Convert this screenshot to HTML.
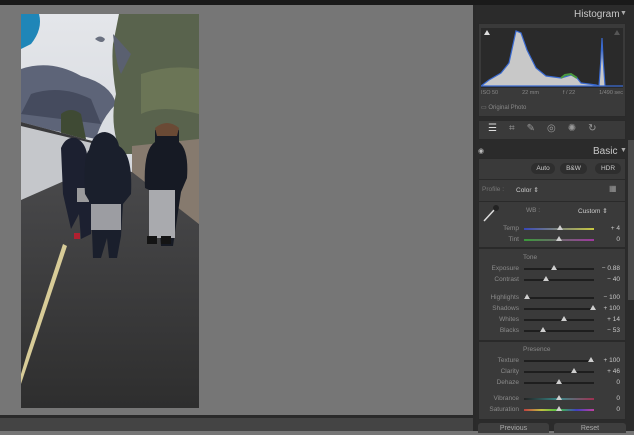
<!DOCTYPE html><html><head><style>
*{margin:0;padding:0;box-sizing:border-box}
body{width:634px;height:431px;overflow:hidden;background:#767676;font-family:"Liberation Sans",sans-serif;position:relative}
.a{position:absolute}
.lbl{position:absolute;font-size:6.5px;color:#8a8a8a;text-align:right;width:60px}
.val{position:absolute;font-size:6.5px;color:#c8c8c8;text-align:right;width:30px}
.trk{position:absolute;height:2px;background:#1e1e1e;width:70px;left:524px}
.th{position:absolute;width:0;height:0;border-left:3px solid transparent;border-right:3px solid transparent;border-bottom:5px solid #cfcfcf}
.pn{position:absolute;left:478px;width:148px;background:#3a3a3a;border:1px solid #2a2a2a}
</style></head><body>
<div class="a" style="left:0;top:0;width:634px;height:5px;background:#1a1a1a"></div>
<div class="a" style="left:0;top:415px;width:474px;height:3px;background:#2a2a2a"></div>
<div class="a" style="left:0;top:418px;width:474px;height:13px;background:#444"></div>
<div class="a" style="left:473px;top:5px;width:3px;height:426px;background:#2a2a2a"></div>
<div class="a" style="left:476px;top:5px;width:158px;height:426px;background:#2b2b2b"></div>
<div class="a" style="left:628px;top:140px;width:6px;height:160px;background:#4a4a4a"></div>
<!-- photo -->
<svg class="a" style="left:21px;top:14px" width="178" height="394" viewBox="0 0 178 394">
<defs><linearGradient id="sky" x1="0" y1="0" x2="0" y2="1"><stop offset="0" stop-color="#e4e6ea"/><stop offset="0.35" stop-color="#d8dbe0"/><stop offset="1" stop-color="#9aa0ab"/></linearGradient>
<linearGradient id="road" x1="0" y1="0" x2="0" y2="1"><stop offset="0" stop-color="#4a4a4c"/><stop offset="1" stop-color="#2e2e2e"/></linearGradient></defs>
<rect width="178" height="394" fill="url(#sky)"/>
<path d="M0 55 Q30 45 60 62 Q90 70 95 90 Q80 105 75 125 L0 110 Z" fill="#5d6478"/>
<path d="M10 80 Q40 70 70 85 L80 110 L0 100 Z" fill="#454b5e"/>
<path d="M74 25 q5 -5 10 0 q-2 6 -10 0z" fill="#6a7080"/>
<path d="M0 0 L18 0 Q22 15 10 30 L0 35 Z" fill="#1f86b8"/>
<path d="M98 0 L178 0 L178 140 L100 140 Q88 110 95 80 Q90 50 92 30 Z" fill="#59634d"/>
<path d="M92 20 Q95 50 100 60 L110 40 Z" fill="#5a6070"/>
<path d="M120 60 Q150 50 178 55 L178 100 Q140 90 120 100Z" fill="#6b7556"/>
<path d="M40 100 Q50 92 60 100 L65 125 L40 125Z" fill="#3f4a34"/>
<path d="M0 108 L75 128 L77 152 L0 186 Z" fill="#c5c7cb"/>
<path d="M0 108 L75 128 L75 130 L0 112Z" fill="#3a3a3c"/>
<path d="M111 132 L178 125 L178 210 L111 160Z" fill="#867a6e"/>
<path d="M0 186 L77 152 L111 158 L178 210 L178 394 L0 394Z" fill="url(#road)"/>
<path d="M42 230 L6 340 L0 360 L0 370 L10 340 L46 232Z" fill="#d8cc98"/>
<!-- left person -->
<path d="M40 134 Q45 122 55 124 Q64 128 66 140 L72 178 L70 220 L60 225 L58 200 L50 215 L42 180 Z" fill="#1c2030"/>
<rect x="56" y="174" width="12" height="14" fill="#9a9a9c"/>
<rect x="53" y="219" width="6" height="6" fill="#b02030"/>
<!-- middle -->
<path d="M68 136 Q72 118 84 118 Q96 120 98 132 Q112 140 110 180 L102 190 L100 222 L96 244 L88 244 L86 224 L80 244 L72 244 L70 190 L64 180 Q62 142 68 136Z" fill="#1a1f2c"/>
<rect x="70" y="190" width="30" height="26" fill="#9c9da2"/>
<!-- right -->
<path d="M134 116 Q148 108 158 116 L158 128 Q168 136 166 164 L160 178 L156 205 L152 232 L140 232 L138 208 L132 178 L124 174 Q122 136 134 128 Z" fill="#161a24"/>
<path d="M134 114 Q146 104 158 114 L156 122 L136 122Z" fill="#6a4a35"/>
<rect x="128" y="176" width="26" height="48" fill="#a9aaae"/>
<rect x="126" y="222" width="10" height="8" fill="#141414"/><rect x="140" y="222" width="10" height="8" fill="#141414"/>
</svg>
<!-- histogram -->
<div class="a" style="left:574px;top:9px;font-size:10px;color:#c8c8c8">Histogram</div>
<div class="a" style="left:620px;top:10px;font-size:7px;color:#aaa">▼</div>
<div class="pn" style="top:23px;height:94px"></div>
<svg class="a" style="left:481px;top:28px" width="142" height="60"><rect width="142" height="60" fill="#2a2a2a"/>
<path d="M0 58 L8 52 L20 45 L28 35 L35 3 L40 5 L46 22 L55 40 L65 48 L80 50 L90 47 L96 50 L100 55 L115 57 L118 58 L120 30 L121 10 L122 30 L124 58 L142 58 Z" fill="#c8c8c8" stroke="#3a6ad0" stroke-width="1.2"/>
<path d="M80 50 L84 47 L90 46 L96 50" stroke="#4a9a40" stroke-width="2" fill="none"/>
<polygon points="3,7 9,7 6,2" fill="#ddd"/><polygon points="133,7 139,7 136,2" fill="#555"/></svg>
<div class="a" style="left:481px;top:90px;width:142px;font-size:5.5px;color:#888;display:flex;justify-content:space-between"><span>ISO 50</span><span>22 mm</span><span>f / 22</span><span>1/490 sec</span></div>
<div class="a" style="left:481px;top:104px;font-size:6px;color:#888">▭ Original Photo</div>
<div class="pn" style="top:120px;height:20px"></div>
<div class="a" style="left:488px;top:123px;font-size:10px;color:#ddd;letter-spacing:12px">☰<span style="color:#999">⌗✎◎✺↻</span></div>
<div class="a" style="left:478px;top:147px;font-size:7px;color:#bbb">◉</div>
<div class="a" style="left:593px;top:146px;font-size:10px;color:#c8c8c8">Basic</div>
<div class="a" style="left:620px;top:147px;font-size:7px;color:#aaa">▼</div>
<div class="pn" style="top:158px;height:262px"></div>
<div class="a" style="left:531px;top:163px;width:24px;height:11px;border-radius:6px;background:#2e2e2e;font-size:6.5px;color:#ccc;text-align:center;line-height:11px">Auto</div>
<div class="a" style="left:560px;top:163px;width:27px;height:11px;border-radius:6px;background:#2e2e2e;font-size:6.5px;color:#ccc;text-align:center;line-height:11px">B&amp;W</div>
<div class="a" style="left:595px;top:163px;width:26px;height:11px;border-radius:6px;background:#2e2e2e;font-size:6.5px;color:#ccc;text-align:center;line-height:11px">HDR</div>
<div class="a" style="left:478px;top:179px;width:148px;height:1px;background:#2a2a2a"></div>
<div class="a" style="left:482px;top:186px;font-size:6.5px;color:#777">Profile :</div>
<div class="a" style="left:516px;top:186px;font-size:6.5px;color:#ccc">Color ⇕</div>
<div class="a" style="left:609px;top:184px;font-size:8px;color:#999">▦</div>
<div class="a" style="left:478px;top:201px;width:148px;height:1px;background:#2a2a2a"></div>
<svg class="a" style="left:481px;top:203px" width="20" height="20"><line x1="3" y1="18" x2="14" y2="6" stroke="#ddd" stroke-width="1.5"/><circle cx="15" cy="5" r="3" fill="#222"/></svg>
<div class="a" style="left:526px;top:207px;font-size:6.5px;color:#888">WB :</div>
<div class="a" style="left:578px;top:207px;font-size:6.5px;color:#ccc">Custom ⇕</div>
<div class="lbl" style="left:459px;top:225px">Temp</div><div class="trk" style="top:228px;background:linear-gradient(90deg,#3848b8,#c8c840)"></div><div class="th" style="left:557px;top:225px"></div><div class="val" style="left:590px;top:225px">+ 4</div>
<div class="lbl" style="left:459px;top:236px">Tint</div><div class="trk" style="top:239px;background:linear-gradient(90deg,#3a9a3a,#a038a0)"></div><div class="th" style="left:556px;top:236px"></div><div class="val" style="left:590px;top:236px">0</div>
<div class="a" style="left:478px;top:247px;width:148px;height:2px;background:#2a2a2a"></div>
<div class="a" style="left:523px;top:254px;font-size:6.5px;color:#888">Tone</div>
<div class="lbl" style="left:459px;top:265px">Exposure</div><div class="trk" style="top:268px"></div><div class="th" style="left:551px;top:265px"></div><div class="val" style="left:590px;top:265px">− 0.88</div>
<div class="lbl" style="left:459px;top:276px">Contrast</div><div class="trk" style="top:279px"></div><div class="th" style="left:543px;top:276px"></div><div class="val" style="left:590px;top:276px">− 40</div>
<div class="lbl" style="left:459px;top:294px">Highlights</div><div class="trk" style="top:297px"></div><div class="th" style="left:524px;top:294px"></div><div class="val" style="left:590px;top:294px">− 100</div>
<div class="lbl" style="left:459px;top:305px">Shadows</div><div class="trk" style="top:308px"></div><div class="th" style="left:590px;top:305px"></div><div class="val" style="left:590px;top:305px">+ 100</div>
<div class="lbl" style="left:459px;top:316px">Whites</div><div class="trk" style="top:319px"></div><div class="th" style="left:561px;top:316px"></div><div class="val" style="left:590px;top:316px">+ 14</div>
<div class="lbl" style="left:459px;top:327px">Blacks</div><div class="trk" style="top:330px"></div><div class="th" style="left:540px;top:327px"></div><div class="val" style="left:590px;top:327px">− 53</div>
<div class="a" style="left:478px;top:340px;width:148px;height:2px;background:#2a2a2a"></div>
<div class="a" style="left:523px;top:346px;font-size:6.5px;color:#888">Presence</div>
<div class="lbl" style="left:459px;top:357px">Texture</div><div class="trk" style="top:360px"></div><div class="th" style="left:588px;top:357px"></div><div class="val" style="left:590px;top:357px">+ 100</div>
<div class="lbl" style="left:459px;top:368px">Clarity</div><div class="trk" style="top:371px"></div><div class="th" style="left:571px;top:368px"></div><div class="val" style="left:590px;top:368px">+ 46</div>
<div class="lbl" style="left:459px;top:379px">Dehaze</div><div class="trk" style="top:382px"></div><div class="th" style="left:556px;top:379px"></div><div class="val" style="left:590px;top:379px">0</div>
<div class="lbl" style="left:459px;top:395px">Vibrance</div><div class="trk" style="top:398px;background:linear-gradient(90deg,#222,#3a8a8a,#a03050)"></div><div class="th" style="left:556px;top:395px"></div><div class="val" style="left:590px;top:395px">0</div>
<div class="lbl" style="left:459px;top:406px">Saturation</div><div class="trk" style="top:409px;background:linear-gradient(90deg,#c04040,#c0c040,#40c040,#4040c0,#c040a0)"></div><div class="th" style="left:556px;top:406px"></div><div class="val" style="left:590px;top:406px">0</div>
<div class="a" style="left:478px;top:423px;width:71px;height:10px;background:#3e3e3e;border-radius:3px 3px 0 0;font-size:7px;color:#aaa;text-align:center;line-height:12px">Previous</div>
<div class="a" style="left:554px;top:423px;width:72px;height:10px;background:#3e3e3e;border-radius:3px 3px 0 0;font-size:7px;color:#aaa;text-align:center;line-height:12px">Reset</div>
</body></html>
